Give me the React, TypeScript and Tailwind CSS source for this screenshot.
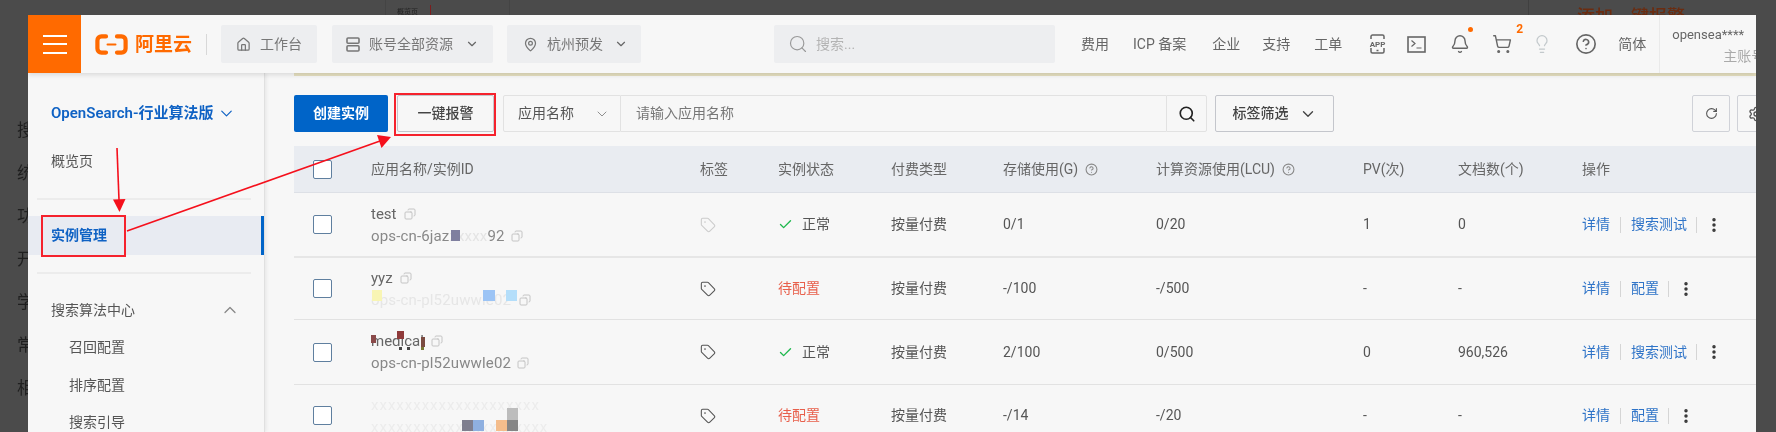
import { Bell, Check, ChevronDown, ChevronUp, CircleHelp, Copy, House, Lightbulb, MapPin, MoreVertical, RotateCw, Search, Settings, ShoppingCart, Tag } from "lucide-react";

const font = "font-['Roboto','Noto_Sans_CJK_SC',sans-serif]";

const columns = "grid grid-cols-[77px_329px_78px_113px_112px_153px_207px_95px_124px_1fr]";

function Checkbox() {
  return <span className="ml-[19px] block h-[19px] w-[19px] rounded-[2px] border border-[#5f7f9f] bg-white" />;
}

function NavLabel({ children, className }: { children: string; className?: string }) {
  return <span className={`whitespace-nowrap text-[14px] text-[#666] ${className ?? ""}`}>{children}</span>;
}

function Pill({ width, children }: { width: string; children: React.ReactNode }) {
  return <div className={`flex h-[38px] items-center rounded-[2px] bg-[#edeef0] text-[14px] text-[#777] ${width}`}>{children}</div>;
}

function Logo() {
  return (
    <svg width="33" height="21" viewBox="0 0 33 21" fill="none" stroke="#ff6a00" strokeLinecap="round">
      <path d="M11 2.4H6.5C4 2.4 2.4 4 2.4 6.5V14.5C2.4 17 4 18.6 6.5 18.6H11" strokeWidth="4.2" />
      <path d="M22 2.4H26.5C29 2.4 30.6 4 30.6 6.5V14.5C30.6 17 29 18.6 26.5 18.6H22" strokeWidth="4.2" />
      <path d="M12.5 10.5H20.5" strokeWidth="2" />
    </svg>
  );
}

function ActionLinks({ second }: { second: string }) {
  return (
    <div className="flex items-center text-[14px] text-[#2f74c8]">
      <span>详情</span>
      <span className="mx-[10px] h-[16px] w-px bg-[#d5d5d5]" />
      <span>{second}</span>
      <span className="ml-[9px] h-[16px] w-px bg-[#d5d5d5]" />
      <MoreVertical size={18} strokeWidth={2.6} className="ml-[8px] text-[#333]" />
    </div>
  );
}

function CopyIcon({ className }: { className?: string }) {
  return <Copy size={12} className={`scale-x-[-1] text-[#c4c4c4] ${className ?? ""}`} />;
}

type Row = {
  name: React.ReactNode;
  id: React.ReactNode;
  ok: boolean;
  tagFaded?: boolean;
  storage: string;
  compute: string;
  pv: string;
  docs: string;
  second: string;
  height: string;
  border: string;
};

const rows: Row[] = [
  {
    name: <><span>test</span><CopyIcon className="ml-[7px]" /></>,
    id: (
      <>
        <span className="relative">
          ops-cn-6jaz<span className="text-[#e4e4e4]">xxxxx</span>92
          <span className="absolute left-[80px] top-[5px] h-[11px] w-[9px] bg-[#7f7f9f]" />
        </span>
        <CopyIcon className="ml-[6px]" />
      </>
    ),
    ok: true,
    tagFaded: true,
    storage: "0/1",
    compute: "0/20",
    pv: "1",
    docs: "0",
    second: "搜索测试",
    height: "h-[65px]",
    border: "border-b-2 border-[#e6e6e6]",
  },
  {
    name: <><span>yyz</span><CopyIcon className="ml-[7px]" /></>,
    id: (
      <>
        <span className="relative text-[#e6e6e6]">
          ops-cn-pl52uwwle02
          <span className="absolute left-[1px] top-[1px] h-[11px] w-[10px] bg-[#f8f5b4]" />
          <span className="absolute left-[112px] top-[1px] h-[11px] w-[12px] bg-[#9cc4f5]" />
          <span className="absolute left-[135px] top-[1px] h-[11px] w-[11px] bg-[#b4defa]" />
        </span>
        <CopyIcon className="ml-[8px]" />
      </>
    ),
    ok: false,
    storage: "-/100",
    compute: "-/500",
    pv: "-",
    docs: "-",
    second: "配置",
    height: "h-[62px]",
    border: "border-b border-[#e2e2e2]",
  },
  {
    name: (
      <>
        <span className="relative">
          medical
          <span className="absolute left-0 top-[5px] h-[8px] w-[5px] bg-[#8a4a4a]" />
          <span className="absolute left-[26px] top-[1px] h-[8px] w-[7px] bg-[#8f3a3a]" />
          <span className="absolute left-[50px] top-[7px] h-[10px] w-[4px] bg-[#7a4a40]" />
        </span>
        <CopyIcon className="ml-[7px]" />
      </>
    ),
    id: (
      <>
        <span className="relative">
          ops-cn-pl52uwwle02
          <span className="absolute left-[28px] top-[-5px] h-[3px] w-[3px] bg-[#444]" />
          <span className="absolute left-[36px] top-[-5px] h-[3px] w-[3px] bg-[#444]" />
          <span className="absolute left-[50px] top-[-5px] h-[3px] w-[3px] bg-[#773]" />
        </span>
        <CopyIcon className="ml-[6px]" />
      </>
    ),
    ok: true,
    storage: "2/100",
    compute: "0/500",
    pv: "0",
    docs: "960,526",
    second: "搜索测试",
    height: "h-[65px]",
    border: "border-b border-[#e2e2e2]",
  },
  {
    name: <span className="tracking-[1px] text-[#ececec]">xxxxxxxxxxxxxxxxxxxx</span>,
    id: (
      <span className="relative tracking-[1px] text-[#ececec]">
        xxxxxxxxxxxxxxxxxxxxx
        <span className="absolute left-[91px] top-[4px] h-[11px] w-[11px] bg-[#7f7f8f]" />
        <span className="absolute left-[102px] top-[4px] h-[11px] w-[11px] bg-[#8fb0e0]" />
        <span className="absolute left-[125px] top-[4px] h-[11px] w-[11px] bg-[#f4bd8c]" />
        <span className="absolute left-[136px] top-[-8px] h-[12px] w-[11px] bg-[#bdbdbd]" />
        <span className="absolute left-[136px] top-[4px] h-[11px] w-[11px] bg-[#858585]" />
      </span>
    ),
    ok: false,
    storage: "-/14",
    compute: "-/20",
    pv: "-",
    docs: "-",
    second: "配置",
    height: "h-[61px]",
    border: "",
  },
];

const headers = ["标签", "实例状态", "付费类型"];

export default function App() {
  return (
    <div className={`relative flex h-[432px] w-[1776px] flex-col overflow-hidden bg-[#4b4b4b] blur-[0.35px] ${font}`}>
      {/* page behind the window */}
      <div className="flex h-[15px] items-start overflow-hidden">
        <span className="ml-[385px] h-[15px] w-px bg-[#444]" />
        <span className="ml-[11px] mt-[6px] text-[7px] leading-[12px] text-[#222]">概览页</span>
        <span className="ml-[12px] mt-[5px] h-[10px] w-px bg-[#7c1d1d]" />
        <span className="ml-[78px] h-[15px] w-px bg-[#444]" />
        <span className="ml-[1018px] h-[15px] w-px bg-[#404040]" />
        <span className="ml-[48px] mt-[6px] whitespace-nowrap text-[18px] font-medium leading-[22px] text-[#6b2c10]">添加一键报警</span>
      </div>

      <div className="flex min-h-0 flex-1">
        <div className="flex w-[28px] flex-col overflow-hidden pt-[94px]">
          {["搜", "统", "功", "开", "学", "常", "相"].map((c) => (
            <div key={c} className="flex h-[43px] shrink-0 items-center">
              <span className="h-[5px] w-[3px] rounded-r-full bg-[#333]" />
              <span className="ml-[17px] text-[17px] leading-none text-[#1f1f1f]">{c}</span>
            </div>
          ))}
        </div>

        {/* window */}
        <div className="flex w-[1728px] flex-col overflow-hidden bg-[#f7f7f7]">
          {/* top bar */}
          <header className="relative z-10 flex h-[58px] shrink-0 items-center bg-[#f7f7f7] shadow-[0_2px_5px_rgba(0,0,0,0.12)]">
            <div className="flex h-full w-[53px] shrink-0 flex-col items-center justify-center gap-[6.5px] bg-[#ff6a00]">
              <span className="h-[2px] w-[24px] bg-white" />
              <span className="h-[2px] w-[24px] bg-white" />
              <span className="h-[2px] w-[24px] bg-white" />
            </div>
            <div className="ml-[14px] flex shrink-0 items-center gap-[7px]">
              <Logo />
              <span className="whitespace-nowrap text-[19px] font-bold leading-none text-[#ff6a00]">阿里云</span>
            </div>
            <span className="ml-[14px] h-[21px] w-px shrink-0 bg-[#d8d8d8]" />
            <div className="ml-[14px] shrink-0">
              <Pill width="w-[96px] pl-[15px]">
                <House size={15} className="text-[#777]" />
                <span className="ml-[9px]">工作台</span>
              </Pill>
            </div>
            <div className="ml-[15px] shrink-0">
              <Pill width="w-[161px] pl-[14px]">
                <svg width="14" height="15" viewBox="0 0 14 15" fill="none" stroke="#777" strokeWidth="1.6">
                  <rect x="1" y="1" width="12" height="5.2" rx="1" />
                  <rect x="1" y="8.8" width="12" height="5.2" rx="1" />
                </svg>
                <span className="ml-[9px]">账号全部资源</span>
                <ChevronDown size={14} className="ml-[12px] text-[#666]" />
              </Pill>
            </div>
            <div className="ml-[14px] shrink-0">
              <Pill width="w-[134px] pl-[16px]">
                <MapPin size={15} className="text-[#777]" />
                <span className="ml-[9px]">杭州预发</span>
                <ChevronDown size={14} className="ml-[11px] text-[#666]" />
              </Pill>
            </div>
            <div className="ml-[133px] flex h-[38px] w-[281px] shrink-0 items-center rounded-[2px] bg-[#edeef0] pl-[14px]">
              <Search size={20} strokeWidth={1.4} className="text-[#999]" />
              <span className="ml-[8px] text-[14px] text-[#b4b4b4]">搜索...</span>
            </div>
            <div className="ml-[26px] flex shrink-0 items-center">
              <NavLabel>费用</NavLabel>
              <NavLabel className="ml-[24px]">ICP 备案</NavLabel>
              <NavLabel className="ml-[26px]">企业</NavLabel>
              <NavLabel className="ml-[22px]">支持</NavLabel>
              <NavLabel className="ml-[24px]">工单</NavLabel>
              <svg className="ml-[25px]" width="21" height="20" viewBox="0 0 21 20" fill="none" stroke="#666" strokeWidth="1.5">
                <path d="M4 5V2.500C4 1.600 4.600 1 5.500 1H15.500C16.400 1 17 1.600 17 2.500V5M4 14V17.500C4 18.400 4.600 19 5.500 19H15.500C16.400 19 17 18.400 17 17.500V14" />
                <path d="M9.500 16.500H11.500" />
                <text x="10.500" y="12.500" textAnchor="middle" fontSize="8" fontWeight="700" fill="#666" stroke="none">APP</text>
              </svg>
              <svg className="ml-[19px]" width="19" height="17" viewBox="0 0 19 17" fill="none" stroke="#666" strokeWidth="1.6">
                <rect x="1" y="1" width="17" height="15" />
                <path d="M4.500 4.500L8 7.500L4.500 10.500M9.500 12H14.500" strokeWidth="1.2" />
              </svg>
              <div className="relative ml-[24px]">
                <Bell size={20} strokeWidth={1.7} className="text-[#666]" />
                <span className="absolute right-[-3px] top-[-7px] h-[5px] w-[5px] rounded-full bg-[#ff6a00]" />
              </div>
              <div className="relative ml-[22px]">
                <ShoppingCart size={20} strokeWidth={1.7} className="text-[#666]" />
                <span className="absolute right-[-11px] top-[-12px] text-[12px] font-bold leading-[14px] text-[#ff6a00]">2</span>
              </div>
              <Lightbulb size={20} strokeWidth={1.5} className="ml-[20px] text-[#c3c9cc]" />
              <CircleHelp size={22} strokeWidth={1.8} className="ml-[23px] text-[#666]" />
              <NavLabel className="ml-[21px]">简体</NavLabel>
            </div>
            <div className="ml-[13px] flex h-full w-[97px] shrink-0 flex-col border-l border-[#eaeaea] pl-[12px] pt-[9px]">
              <span className="whitespace-nowrap text-[13px] leading-[22px] text-[#666]">
                opensea****<span className="ml-[22px] text-[#aaa]">..</span>
              </span>
              <span className="ml-[51px] whitespace-nowrap text-[14px] leading-[20px] text-[#aaa]">主账号</span>
            </div>
          </header>

          <div className="flex min-h-0 flex-1">
            {/* sidebar */}
            <aside className="w-[237px] shrink-0 border-r border-[#e0e0e0] shadow-[1px_0_4px_rgba(0,0,0,0.08)]">
              <div className="flex items-center pl-[23px] pt-[29px] text-[15px] font-semibold leading-[22px] text-[#0f62c4]">
                <span className="whitespace-nowrap">OpenSearch-行业算法版</span>
                <ChevronDown size={19} strokeWidth={1.5} className="ml-[4px]" />
              </div>
              <div className="pl-[23px] pt-[26px] text-[14px] leading-[22px] text-[#555]">概览页</div>
              <div className="ml-[9px] mt-[26px] h-[2px] w-[214px] bg-[#ececec]" />
              <div className="mt-[16px] flex h-[39px] items-center border-r-[3px] border-[#0064c8] bg-[#e8ebf2] pl-[23px] text-[14px] font-semibold text-[#0f62c4]">
                实例管理
              </div>
              <div className="ml-[9px] mt-[17px] h-[2px] w-[214px] bg-[#ececec]" />
              <div className="flex items-center pl-[23px] pt-[25px] text-[14px] leading-[22px] text-[#555]">
                <span>搜索算法中心</span>
                <ChevronUp size={20} strokeWidth={1.5} className="ml-[85px] text-[#888]" />
              </div>
              <div className="pl-[41px] pt-[15px] text-[14px] leading-[22px] text-[#555]">召回配置</div>
              <div className="pl-[41px] pt-[16px] text-[14px] leading-[22px] text-[#555]">排序配置</div>
              <div className="pl-[41px] pt-[15px] text-[14px] leading-[22px] text-[#555]">搜索引导</div>
            </aside>

            {/* content */}
            <main className="min-w-0 flex-1 pl-[29px]">
              <div className="h-[3px] bg-[#e6e0c0]" />
              <div className="mt-[19px] flex h-[37px] items-stretch">
                <button className="w-[94px] shrink-0 rounded-[2px] bg-[#0064c8] text-[14px] font-semibold text-white">创建实例</button>
                <button className="ml-[9px] w-[97px] shrink-0 rounded-[2px] border border-[#c4c6cc] text-[14px] font-medium text-[#444]">一键报警</button>
                <div className="ml-[9px] flex w-[118px] shrink-0 items-center justify-between rounded-l-[2px] border border-[#e2e2e2] pl-[14px] pr-[10px] text-[14px] text-[#555]">
                  <span>应用名称</span>
                  <ChevronDown size={16} strokeWidth={1.4} className="text-[#888]" />
                </div>
                <div className="flex w-[545px] shrink-0 items-center border-y border-[#e2e2e2] pl-[15px] text-[14px] text-[#777]">请输入应用名称</div>
                <div className="flex w-[41px] shrink-0 items-center justify-center rounded-r-[2px] border border-[#e2e2e2]">
                  <Search size={18} strokeWidth={2.2} className="text-[#222]" />
                </div>
                <button className="ml-[8px] flex w-[119px] shrink-0 items-center justify-center gap-[10px] rounded-[2px] border border-[#c4c6cc] text-[14px] font-medium text-[#444]">
                  标签筛选
                  <ChevronDown size={18} strokeWidth={1.8} />
                </button>
                <button className="ml-[358px] flex w-[38px] shrink-0 items-center justify-center rounded-[2px] border border-[#d0d2d8]">
                  <RotateCw size={13} className="text-[#555]" />
                </button>
                <button className="ml-[7px] flex w-[38px] shrink-0 items-center justify-center rounded-[2px] border border-[#d0d2d8]">
                  <Settings size={16} className="text-[#555]" />
                </button>
              </div>

              <div className={`mt-[14px] h-[47px] items-center border-b border-[#dde0e6] bg-[#e9ecf1] text-[14px] text-[#666] ${columns}`}>
                <Checkbox />
                <span>应用名称/实例ID</span>
                {headers.map((h) => (
                  <span key={h}>{h}</span>
                ))}
                <span className="flex items-center gap-[7px]">
                  存储使用(G)
                  <CircleHelp size={13} className="text-[#888]" />
                </span>
                <span className="flex items-center gap-[7px]">
                  计算资源使用(LCU)
                  <CircleHelp size={13} className="text-[#888]" />
                </span>
                <span>PV(次)</span>
                <span>文档数(个)</span>
                <span>操作</span>
              </div>

              {rows.map((row, i) => (
                <div key={i} className={`items-center text-[14px] text-[#555] ${columns} ${row.height} ${row.border}`}>
                  <Checkbox />
                  <div className="leading-[22px]">
                    <div className="flex items-center whitespace-nowrap text-[15px] text-[#666]">{row.name}</div>
                    <div className="flex items-center whitespace-nowrap text-[15px] tracking-[0.15px] text-[#888]">{row.id}</div>
                  </div>
                  <Tag size={16} strokeWidth={1.6} className={row.tagFaded ? "text-[#ccc]" : "text-[#555]"} />
                  {row.ok ? (
                    <div className="flex items-center gap-[9px]">
                      <Check size={15} strokeWidth={2.2} className="text-[#1fb84e]" />
                      <span>正常</span>
                    </div>
                  ) : (
                    <span className="text-[#e8604c]">待配置</span>
                  )}
                  <span>按量付费</span>
                  <span>{row.storage}</span>
                  <span>{row.compute}</span>
                  <span>{row.pv}</span>
                  <span>{row.docs}</span>
                  <ActionLinks second={row.second} />
                </div>
              ))}
            </main>
          </div>
        </div>
        <div className="flex-1" />
      </div>

      {/* red annotations pasted over the screenshot */}
      <span className="absolute left-[41px] top-[215px] h-[42px] w-[85px] border-2 border-[#f5222d]" />
      <span className="absolute left-[394px] top-[93px] h-[43px] w-[102px] border-2 border-[#f5222d]" />
      <svg className="absolute left-0 top-0" width="500" height="260" viewBox="0 0 500 260" fill="none">
        <path d="M117 148L119 200" stroke="#f5101c" strokeWidth="1.6" />
        <path d="M113 199.500L125.500 199L119.500 212Z" fill="#f5101c" />
        <path d="M127 231L380 141" stroke="#f5101c" strokeWidth="1.6" />
        <path d="M377 135L381.500 148L391 137Z" fill="#f5101c" />
      </svg>
    </div>
  );
}
